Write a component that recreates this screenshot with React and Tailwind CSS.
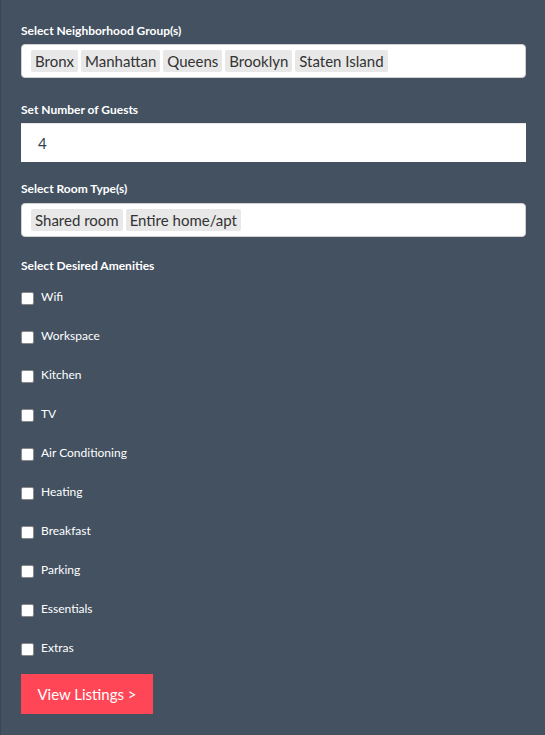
import React from "react";

const font = { fontFamily: "Lato, 'Noto Sans', sans-serif" };

function Tag({ children }) {
  return (
    <span className="h-[22px] px-[4px] flex items-center bg-[#e8e8e8] rounded-[2px] text-[15px] text-[#333]">
      {children}
    </span>
  );
}

function Label({ children, className = "" }) {
  return (
    <div className={"text-[12px] leading-[14px] font-bold text-white " + className}>
      {children}
    </div>
  );
}

const amenities = [
  "Wifi",
  "Workspace",
  "Kitchen",
  "TV",
  "Air Conditioning",
  "Heating",
  "Breakfast",
  "Parking",
  "Essentials",
  "Extras",
];

export default function App() {
  return (
    <div
      className="min-h-[735px] w-[545px] bg-[#435161] border-l border-[#3a4655] pl-[20px] pt-[24px]"
      style={font}
    >
      <div className="w-[505px] flex flex-col">
        <Label>Select Neighborhood Group(s)</Label>
        <div className="mt-[6px] h-[34px] bg-white rounded-[4px] border border-[#d0d0d0] flex items-center gap-[3px] pl-[9px]">
          <Tag>Bronx</Tag>
          <Tag>Manhattan</Tag>
          <Tag>Queens</Tag>
          <Tag>Brooklyn</Tag>
          <Tag>Staten Island</Tag>
        </div>

        <Label className="mt-[25px]">Set Number of Guests</Label>
        <div className="mt-[6px] h-[39px] bg-white flex items-center pl-[17px] text-[15px] text-[#2c3e50] border-t border-[#e6e6e6]">
          4
        </div>

        <Label className="mt-[20px]">Select Room Type(s)</Label>
        <div className="mt-[7px] h-[34px] bg-white rounded-[4px] border border-[#d0d0d0] flex items-center gap-[3px] pl-[9px]">
          <Tag>Shared room</Tag>
          <Tag>Entire home/apt</Tag>
        </div>

        <Label className="mt-[22px]">Select Desired Amenities</Label>
        <div className="mt-[4px] flex flex-col">
          {amenities.map((a) => (
            <div key={a} className="h-[39px] flex items-center">
              <span className="ml-[0px] w-[13px] h-[13px] mt-[3px] bg-white border border-[#8a8a8a] rounded-[2px]" />
              <span className="ml-[7px] text-[12px] leading-[14px] text-white">{a}</span>
            </div>
          ))}
        </div>

        <button className="mt-[7px] w-[132px] h-[40px] bg-[#fe4656] text-white text-[15px] flex items-center justify-center">
          View Listings &gt;
        </button>
      </div>
    </div>
  );
}
